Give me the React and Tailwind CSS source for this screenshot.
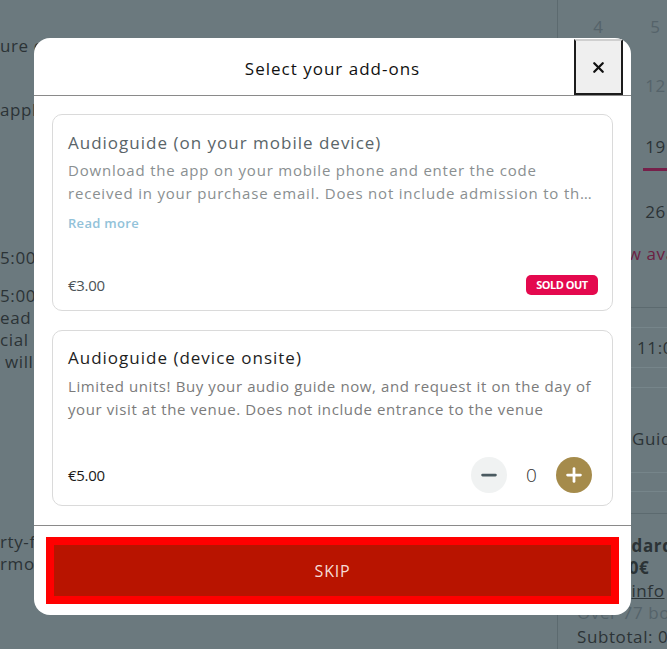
import { X, Minus, Plus } from "lucide-react";

const font = { fontFamily: '"Open Sans", "Liberation Sans", sans-serif' };

function BackgroundPage() {
  return (
    <div className="flex h-[649px] overflow-hidden bg-[#6b797e] text-[17px] leading-[22px] tracking-[0.6px] text-[#2b3336]">
      {/* left column of the page behind */}
      <div className="w-[557px] shrink-0 whitespace-nowrap">
        <p className="pt-[35px]">ure changes to the schedule may apply</p>
        <p className="mt-[42px]">applies to all the visits booked online</p>
        <p className="mt-[126px]">5:00 - 17:00</p>
        <div className="mt-[16px]">
          <p>5:00 - 18:00</p>
          <p>ead of time to the venue</p>
          <p>cial opening hours</p>
          <p>&nbsp;will be announced soon</p>
        </div>
        <div className="mt-[158px]">
          <p>rty-five minutes before closing</p>
          <p>rmore information</p>
        </div>
      </div>

      {/* right sidebar */}
      <div className="flex-1 border-l border-[#5c6a6f] whitespace-nowrap">
        <div className="grid grid-cols-[57px_57px] pl-[12px] text-center">
          <div className="h-[54px] flex items-center justify-center text-[#55636a]">4</div>
          <div className="h-[54px] flex items-center justify-center text-[#55636a]">5</div>
          <div className="h-[63px] flex items-center justify-center text-[#55636a]">11</div>
          <div className="h-[63px] flex items-center justify-center text-[#55636a]">12</div>
          <div className="h-[63px] flex items-center justify-center">18</div>
          <div className="h-[63px] flex flex-col items-center justify-center">
            <span className="mt-[10px]">19</span>
            <span className="mt-[10px] h-[3px] w-[26px] bg-[#76204a]" />
          </div>
          <div className="h-[63px] flex items-center justify-center">25</div>
          <div className="h-[63px] flex items-center justify-center">26</div>
        </div>
        <p className="pl-[44px] text-[#6c2143]">View availability</p>
        <div className="mt-[42px] border-t border-[#5c6a6f] pl-[19px]">
          <div className="mt-[19px] h-[41px] border-y border-[#76858a] pl-[60px] flex items-center">11:00</div>
          <div className="mt-[19px] border-t border-[#76858a]" />
          <p className="mt-[40px] pl-[55px]">Guided tour</p>
          <div className="mt-[22px] border-t border-[#76858a]" />
          <div className="mt-[18px] border-t border-[#76858a]" />
          <div className="mt-[21px] border-t border-[#5c6a6f]" />
        </div>
        <div className="pl-[19px] pt-[21px] leading-[22px]">
          <p className="pl-[14px] font-bold">Standard</p>
          <p className="font-bold">From 0€</p>
          <p className="mt-[1px]">
            More <span className="ml-[5px] underline">info</span>
          </p>
          <p className="text-[#55636a]">Over 77 bookings</p>
          <p className="mt-[2px]">Subtotal: 0€</p>
        </div>
      </div>
    </div>
  );
}

function SoldOutCard() {
  return (
    <div className="h-[197px] rounded-[10px] border border-[#dadada] px-[15px] pt-[16px] pb-[15px] flex flex-col">
      <h3 className="text-[17px] leading-[24px] tracking-[1px] text-[#5a6569]">Audioguide (on your mobile device)</h3>
      <p className="mt-[4px] text-[15px] leading-[23px] tracking-[0.8px] text-[#8a8f91] line-clamp-2">
        Download the app on your mobile phone and enter the code received in your purchase email. Does not
        include admission to the venue
      </p>
      <button className="mt-[8px] self-start text-[13px] leading-[20px] font-semibold tracking-[0.3px] text-[#92c2d9]">
        Read more
      </button>
      <div className="mt-auto flex h-[20px] items-center justify-between">
        <span className="text-[15px] tracking-[-0.3px] text-[#4b5357]">€3.00</span>
        <span className="mr-[-1px] flex h-[20px] w-[72px] items-center justify-center rounded-[5px] bg-[#e4094e] text-[11px] font-bold tracking-[-0.5px] text-white">
          SOLD OUT
        </span>
      </div>
    </div>
  );
}

function OnsiteCard() {
  return (
    <div className="h-[176px] rounded-[10px] border border-[#dadada] px-[15px] pt-[15px] pb-[12px] flex flex-col">
      <h3 className="text-[17px] leading-[24px] tracking-[1px] text-[#1e1e1e]">Audioguide (device onsite)</h3>
      <p className="mt-[5px] text-[15px] leading-[23px] tracking-[0.6px] text-[#7b7b7b]">
        Limited units! Buy your audio guide now, and request it on the day of your visit at the venue. Does not
        include entrance to the venue
      </p>
      <div className="mt-auto flex h-[36px] items-center justify-between">
        <span className="text-[15px] tracking-[-0.3px] text-[#1a1a1a]">€5.00</span>
        <div className="mr-[5px] flex items-center">
          <button className="flex size-9 items-center justify-center rounded-full bg-[#f0f2f2] text-[#4a5a60]">
            <Minus size={22} strokeWidth={3} />
          </button>
          <span className="w-[49px] text-center text-[19px] font-light text-[#333]">0</span>
          <button className="flex size-9 items-center justify-center rounded-full bg-[#a58b4b] text-white">
            <Plus size={22} strokeWidth={3} />
          </button>
        </div>
      </div>
    </div>
  );
}

export default function App() {
  return (
    <div className="relative h-[649px] overflow-hidden" style={font}>
      <BackgroundPage />

      {/* Add-ons modal */}
      <div className="absolute left-[34px] top-[38px] w-[597px] overflow-hidden rounded-2xl bg-white">
        <div className="relative flex h-[58px] items-center justify-center border-b border-[#8a8a8a] pt-[5px]">
          <h2 className="text-[17px] tracking-[1px] text-[#111]">Select your add-ons</h2>
          <button className="absolute right-[8px] top-px flex h-[56px] w-[49px] items-center justify-center border-2 border-[#1c1c1c] border-t-[#cfcfcf] bg-[#efefef] text-[#111]">
            <X size={17} strokeWidth={3.2} />
          </button>
        </div>

        <div className="flex flex-col gap-[19px] px-[18px] pt-[18px] pb-[19px]">
          <SoldOutCard />
          <OnsiteCard />
        </div>

        <div className="border-t border-[#8a8a8a] px-[12px] py-[11px]">
          <button className="flex h-[67px] w-full items-center justify-center border-[8px] border-[#ff0000] bg-[#b81400] text-[16px] tracking-[0.8px] text-[#f6dcd6]">
            SKIP
          </button>
        </div>
      </div>
    </div>
  );
}
